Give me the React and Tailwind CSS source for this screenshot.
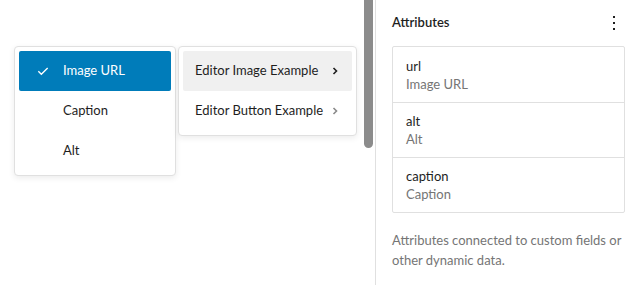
import React from "react";

const font = { fontFamily: 'Lato, "Noto Sans", sans-serif' };

function Check() {
  return (
    <svg width="16" height="16" viewBox="0 0 24 24" fill="none" stroke="currentColor" strokeWidth="2">
      <path d="M5 12.5l4.5 4.5L19 7.5" />
    </svg>
  );
}

function Chevron({ className }) {
  return (
    <svg width="10" height="10" viewBox="0 0 10 10" className={className} fill="none" stroke="currentColor" strokeWidth="1.6">
      <path d="M3.5 2l3 3-3 3" />
    </svg>
  );
}

function MenuItem({ label, selected }) {
  return (
    <div
      className={
        "flex h-10 items-center rounded-[2px] px-4 text-[13px] " +
        (selected ? "bg-[#007cba] text-white" : "text-[#1e1e1e]")
      }
    >
      <span className="flex w-[28px] justify-start">{selected && <Check />}</span>
      <span className="whitespace-nowrap">{label}</span>
    </div>
  );
}

function SubItem({ label, active }) {
  return (
    <div
      className={
        "flex h-10 items-center justify-between rounded-[2px] pl-3 pr-3 text-[13px] text-[#1e1e1e] " +
        (active ? "bg-[#f0f0f0]" : "")
      }
    >
      <span className="whitespace-nowrap">{label}</span>
      <Chevron className={active ? "text-[#1e1e1e]" : "text-[#8a8a8a]"} />
    </div>
  );
}

const attrs = [
  ["url", "Image URL"],
  ["alt", "Alt"],
  ["caption", "Caption"],
];

export default function App() {
  return (
    <div className="flex h-[285px] w-[638px] overflow-hidden bg-white" style={font}>
      <div className="flex w-[375px] shrink-0">
        <div className="flex flex-1 items-start gap-[2px] pl-[14px] pt-[46px]">
          <div className="w-[162px] rounded-[4px] border border-[#e0e0e0] bg-white p-1 shadow-[0_2px_6px_rgba(0,0,0,0.08)]">
            <MenuItem label="Image URL" selected />
            <MenuItem label="Caption" />
            <MenuItem label="Alt" />
          </div>
          <div className="w-[179px] rounded-[4px] border border-[#e0e0e0] bg-white p-1 shadow-[0_2px_6px_rgba(0,0,0,0.08)]">
            <SubItem label="Editor Image Example" active />
            <SubItem label="Editor Button Example" />
          </div>
        </div>
        <div className="mr-[2px] h-[148px] w-[9px] rounded-b-full bg-[#8c8c8c]" />
      </div>
      <div className="flex-1 border-l border-[#e0e0e0] pl-4 pr-[13px]">
        <div className="flex h-[44px] items-center justify-between pt-[2px]">
          <span className="text-[13px] font-semibold text-[#1e1e1e]">Attributes</span>
          <svg width="24" height="24" viewBox="0 0 24 24" className="mr-[-1px]" fill="#1e1e1e">
            <rect x="11" y="5" width="2" height="2" />
            <rect x="11" y="11" width="2" height="2" />
            <rect x="11" y="17" width="2" height="2" />
          </svg>
        </div>
        <div className="mt-[2px] rounded-[2px] border border-[#e0e0e0]">
          {attrs.map(([name, label], i) => (
            <div
              key={name}
              className={"flex h-[55px] flex-col justify-center px-[13px] " + (i > 0 ? "border-t border-[#e0e0e0]" : "")}
            >
              <span className="text-[13px] leading-[18px] text-[#1e1e1e]">{name}</span>
              <span className="text-[13px] leading-[18px] text-[#757575]">{label}</span>
            </div>
          ))}
        </div>
        <p className="mt-[17px] text-[13px] leading-[20px] text-[#757575]">
          Attributes connected to custom fields or other dynamic data.
        </p>
      </div>
    </div>
  );
}
